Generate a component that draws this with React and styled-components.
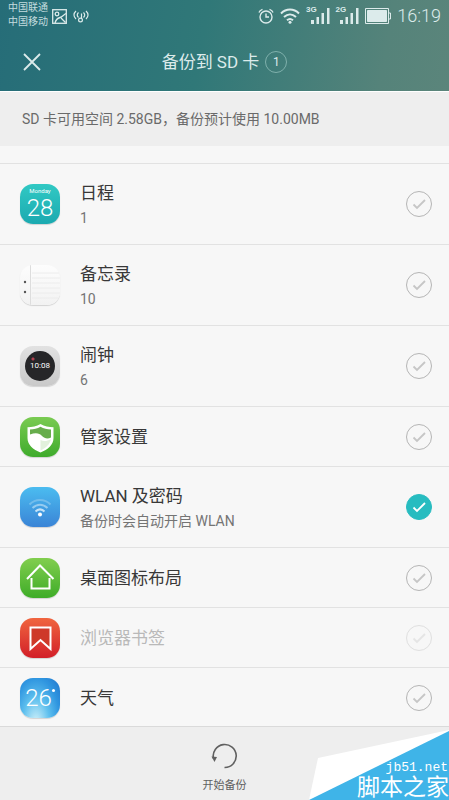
import React, { useState } from 'react';
import styled, { createGlobalStyle } from 'styled-components';

const GlobalStyle = createGlobalStyle`
  * {
    box-sizing: border-box;
  }

  body {
    margin: 0;
    background-color: #f7f7f7;
    font-family: Roboto, 'Noto Sans CJK SC', sans-serif;
    color: #3d3d3d;
  }
`;

const Screen = styled.div`
  position: relative;
  display: flex;
  flex-direction: column;
  height: 100vh;
  overflow: hidden;
`;

const Header = styled.header`
  flex: none;
  background: linear-gradient(100deg, #266d78 0%, #307878 45%, #55837a 85%, #5b857b 100%);
  border-bottom: 1px solid #ffffff;
  color: #dcebeb;
`;

const StatusBar = styled.div`
  display: flex;
  align-items: center;
  justify-content: space-between;
  height: 32px;
  padding: 0 8px;
`;

const StatusGroup = styled.div`
  display: flex;
  align-items: center;
  gap: ${(props) => props.$gap}px;
`;

const Carriers = styled.div`
  font-size: 10px;
  line-height: 14px;
  padding-bottom: 2px;
  color: #c3dcdf;
`;

const Time = styled.time`
  font-size: 18px;
  line-height: 32px;
  font-weight: 300;
`;

const NetworkType = styled.span`
  align-self: flex-start;
  font-family: 'Liberation Sans', sans-serif;
  font-size: 8px;
  font-weight: 700;
  line-height: 8px;
  margin-right: -6px;
`;

const Signal = styled.div`
  display: flex;
  height: 20px;
  padding-bottom: 2px;
  align-items: flex-end;
`;

const Toolbar = styled.div`
  display: grid;
  grid-template-columns: 1fr auto 1fr;
  align-items: center;
  height: 59px;
  padding: 0 22px;
`;

const IconButton = styled.button`
  display: flex;
  justify-self: start;
  padding: 0;
  border: 0;
  background: none;
  color: inherit;
  cursor: pointer;
`;

const Title = styled.h1`
  display: flex;
  align-items: center;
  gap: 6px;
  margin: 0;
  font-size: 17px;
  line-height: 24px;
  font-weight: 400;
`;

const Count = styled.span`
  width: 22px;
  height: 22px;
  border: 1px solid #7fb0ac;
  border-radius: 50%;
  font-size: 12px;
  line-height: 20px;
  text-align: center;
`;

const StorageInfo = styled.p`
  flex: none;
  margin: 0;
  padding: 0 22px;
  background-color: #eeeeee;
  color: #6a6a6a;
  font-size: 14px;
  line-height: 54px;
`;

const List = styled.ul`
  flex: 1;
  min-height: 0;
  overflow: hidden;
  margin: 0;
  padding: 17px 0 0;
  list-style: none;
`;

const Row = styled.label`
  display: flex;
  align-items: center;
  gap: 20px;
  min-height: ${(props) => (props.$tall ? 81 : 60)}px;
  padding: 0 17px 0 20px;
  border-top: 1px solid #e2e2e2;
  cursor: pointer;
`;

const RowText = styled.span`
  flex: 1;
  display: flex;
  flex-direction: column;
`;

const RowTitle = styled.span`
  font-size: 17px;
  line-height: 28px;
  color: ${(props) => (props.$disabled ? '#b9b9b9' : '#383838')};
`;

const RowDetail = styled.span`
  font-size: 14px;
  line-height: 22px;
  color: #747474;
`;

const CheckWrap = styled.span`
  display: grid;
  color: ${(props) => (props.$checked ? '#ffffff' : '#c6c6c6')};
  opacity: ${(props) => (props.$disabled ? 0.35 : 1)};

  > * {
    grid-area: 1 / 1;
  }

  svg {
    pointer-events: none;
  }
`;

const Checkbox = styled.input`
  appearance: none;
  width: 26px;
  height: 26px;
  margin: 0;
  border: 1px solid #b5b5b5;
  border-radius: 50%;

  &:checked {
    border-color: #27bcc0;
    background-color: #27bcc0;
  }
`;

const AppIcon = styled.span`
  flex: none;
  display: flex;
  flex-direction: column;
  align-items: center;
  justify-content: center;
  width: 40px;
  height: 40px;
  border-radius: 13px;
  overflow: hidden;
  background: ${(props) => props.$bg};
  box-shadow: 0 1px 1px rgba(0, 0, 0, 0.15);
  color: #ffffff;
`;

const Weekday = styled.span`
  font-size: 6px;
  line-height: 8px;
`;

const IconNumber = styled.span`
  display: flex;
  font-size: 24px;
  line-height: 26px;
  font-weight: 300;
`;

const DegreeDot = styled.span`
  width: 3px;
  height: 3px;
  margin-top: 4px;
  border-radius: 50%;
  background-color: #ffffff;
`;

const ClockFace = styled.span`
  width: 30px;
  height: 30px;
  border-radius: 50%;
  background: radial-gradient(circle at 8px 8px, #b0404f 1px, #262628 2px);
  font-size: 8px;
  line-height: 30px;
  text-align: center;
`;

const Footer = styled.footer`
  flex: none;
  display: flex;
  justify-content: center;
  height: 74px;
  border-top: 1px solid #dadada;
  background-color: #eeeeee;
`;

const StartButton = styled.button`
  display: flex;
  flex-direction: column;
  align-items: center;
  gap: 8px;
  padding: 15px 12px 0;
  border: 0;
  background: none;
  font-family: inherit;
  font-size: 11px;
  line-height: 16px;
  color: #606060;
  cursor: pointer;
`;

const Watermark = styled.div`
  position: absolute;
  right: 0;
  bottom: 0;
  display: grid;
  width: 140px;
  height: 70px;
  color: #ffffff;

  > * {
    grid-area: 1 / 1;
  }
`;

const WatermarkText = styled.div`
  display: flex;
  flex-direction: column;
  align-items: flex-end;
  justify-content: flex-end;
  z-index: 1;
`;

const SiteUrl = styled.span`
  padding-right: 1px;
  font-family: 'Liberation Mono', monospace;
  font-size: 13px;
  line-height: 16px;
`;

const SiteName = styled.span`
  font-size: 23px;
  line-height: 24px;
  white-space: nowrap;
`;

const SignalBars = () => (
  <svg width="19" height="16" viewBox="0 0 19 16" fill="currentColor">
    <path d="M0 12h3v4H0zM5.500 9H8v7H5.500zM10.500 5H13v11h-2.500zM16 0h2.500v16H16z" />
  </svg>
);

const CalendarIcon = () => (
  <AppIcon $bg="linear-gradient(#31c9c4, #1ba9b0)">
    <Weekday>Monday</Weekday>
    <IconNumber>28</IconNumber>
  </AppIcon>
);

const MemoIcon = () => (
  <AppIcon $bg="linear-gradient(#fdfdfd, #f2f2f2)">
    <svg width="40" height="40" viewBox="0 0 40 40">
      <path d="M12 8h28M12 13h28M12 18h28M12 23h28M12 28h28M12 33h28" stroke="#ececec" />
      <path d="M10.500 0v40" stroke="#dddddd" />
      <circle cx="5" cy="17" r="1.200" fill="#555555" />
      <circle cx="5" cy="27" r="1.200" fill="#555555" />
    </svg>
  </AppIcon>
);

const ClockIcon = () => (
  <AppIcon $bg="linear-gradient(#e2e2e2, #c9c9c9)">
    <ClockFace>10:08</ClockFace>
  </AppIcon>
);

const ShieldIcon = () => (
  <AppIcon $bg="linear-gradient(#7acb52, #3fab2c)">
    <svg width="40" height="40" viewBox="0 0 40 40">
      <path d="M20.500 7c4 2.500 8.500 3.200 13 3.200V21c0 7-5.500 11.500-13 14.500C13 32.500 7.500 28 7.500 21V10.200c4.500 0 9-.7 13-3.200z" fill="#ffffff" />
      <path d="M20.500 9.800c3.200 1.800 6.600 2.500 10.500 2.700v8c-3 1.500-6.500 1.200-9-1.500-2.500-3-6.500-3.500-12-1.500v-5c3.900-.2 7.300-.9 10.500-2.700z" fill="#67ad4c" />
      <path d="M20.500 23c3 1.500 6.500 1.200 10.300-.8-.5 4.800-4.500 8.300-10.300 11.300z" fill="#e2f1dc" />
    </svg>
  </AppIcon>
);

const WlanIcon = () => (
  <AppIcon $bg="linear-gradient(#4bbcf0, #3a84d6)">
    <svg width="40" height="40" viewBox="0 0 40 40" fill="none" strokeWidth="2">
      <path d="M9.500 17.500c6-6 15-6 21 0" stroke="#72bdec" />
      <path d="M12.500 21c4.500-4.500 10.500-4.500 15 0" stroke="#94cbf0" />
      <path d="M15.500 24.500c3-2.800 6-2.800 9 0" stroke="#c2e1f7" />
      <circle cx="20" cy="27.500" r="2" fill="#ffffff" />
    </svg>
  </AppIcon>
);

const HomeIcon = () => (
  <AppIcon $bg="linear-gradient(#82ce4e, #3eac28)">
    <svg width="40" height="40" viewBox="0 0 40 40" fill="none" stroke="#ffffff" strokeWidth="2">
      <path d="M7 21L20 7.500 33.500 21" />
      <path d="M11.500 20v10.500h18V20" />
    </svg>
  </AppIcon>
);

const BookmarkIcon = () => (
  <AppIcon $bg="linear-gradient(#f0653f, #d21f28)">
    <svg width="40" height="40" viewBox="0 0 40 40">
      <path d="M10.500 9.500h20V31l-10-9-10 9z" fill="#ce3929" stroke="#ffffff" strokeWidth="2" />
    </svg>
  </AppIcon>
);

const WeatherIcon = () => (
  <AppIcon $bg="radial-gradient(ellipse at 40% 115%, #d8f4fa 0%, #5fc0ee 40%, #3096e0 70%, #1f74cc 100%)">
    <IconNumber>
      26
      <DegreeDot />
    </IconNumber>
  </AppIcon>
);

const ITEMS = [
  { id: 'calendar', title: '日程', detail: '1', icon: <CalendarIcon /> },
  { id: 'memo', title: '备忘录', detail: '10', icon: <MemoIcon /> },
  { id: 'clock', title: '闹钟', detail: '6', icon: <ClockIcon /> },
  { id: 'manager', title: '管家设置', icon: <ShieldIcon /> },
  { id: 'wlan', title: 'WLAN 及密码', detail: '备份时会自动开启 WLAN', icon: <WlanIcon /> },
  { id: 'layout', title: '桌面图标布局', icon: <HomeIcon /> },
  { id: 'bookmark', title: '浏览器书签', icon: <BookmarkIcon />, disabled: true },
  { id: 'weather', title: '天气', icon: <WeatherIcon /> },
];

const App = () => {
  const [selected, setSelected] = useState(['wlan']);

  const toggle = (id) => {
    setSelected((prev) => (prev.includes(id) ? prev.filter((x) => x !== id) : [...prev, id]));
  };

  return (
    <Screen>
      <GlobalStyle />
      <Header>
        <StatusBar>
          <StatusGroup $gap={4}>
            <Carriers>
              <div>中国联通</div>
              <div>中国移动</div>
            </Carriers>
            <svg width="15" height="15" viewBox="0 0 15 15" fill="none" stroke="currentColor" strokeWidth="1.300">
              <rect x="0.700" y="0.700" width="13.600" height="13.600" />
              <circle cx="5" cy="5" r="1.800" />
              <path d="M3 14c1-4 3-5 5-5.500S11.500 6 14 4.500M9 9l4.500 4.500" />
            </svg>
            <svg width="20" height="15" viewBox="0 0 20 15" fill="none" stroke="currentColor" strokeWidth="1.200">
              <path d="M5 2C2.300 4.500 2.300 7.500 5 10M7.500 3.500c-1.600 1.600-1.600 3.400 0 5M15 2c2.700 2.500 2.700 5.500 0 8M12.500 3.500c1.600 1.600 1.600 3.400 0 5M10.500 4.500V10" />
              <circle cx="9.500" cy="11" r="1.900" />
            </svg>
          </StatusGroup>
          <StatusGroup $gap={6}>
            <svg width="16" height="16" viewBox="0 0 16 16" fill="none" stroke="currentColor" strokeWidth="1.400">
              <circle cx="8" cy="9" r="6" />
              <path d="M8 5.500V9h3M1 4.500C1.500 3 2.500 2 4.500 1.300M15 4.500C14.500 3 13.500 2 11.500 1.300" />
            </svg>
            <svg width="20" height="16" viewBox="0 0 20 16" fill="none" stroke="currentColor" strokeWidth="2">
              <path d="M1 5.500c5.300-5.200 12.700-5.200 18 0M4 9c3.700-3.500 8.300-3.500 12 0M7 12.200c2-1.700 4-1.700 6 0" />
              <circle cx="10" cy="14.200" r="1.500" fill="currentColor" stroke="none" />
            </svg>
            <Signal>
              <NetworkType>3G</NetworkType>
              <SignalBars />
            </Signal>
            <Signal>
              <NetworkType>2G</NetworkType>
              <SignalBars />
            </Signal>
            <svg width="26" height="16" viewBox="0 0 26 16" fill="none" stroke="currentColor">
              <path d="M.5.5h23v15H.5zM24 5h1.500v6H24" />
              <path d="M2.500 2.500h19v11h-19z" fill="currentColor" />
            </svg>
            <Time>16:19</Time>
          </StatusGroup>
        </StatusBar>
        <Toolbar>
          <IconButton type="button" aria-label="关闭">
            <svg width="20" height="20" viewBox="0 0 20 20" stroke="currentColor" strokeWidth="1.800">
              <path d="M2 2l16 16M18 2L2 18" />
            </svg>
          </IconButton>
          <Title>
            备份到 SD 卡
            <Count>{selected.length}</Count>
          </Title>
        </Toolbar>
      </Header>

      <StorageInfo>SD 卡可用空间 2.58GB，备份预计使用 10.00MB</StorageInfo>

      <List>
        {ITEMS.map((item) => {
          const checked = selected.includes(item.id);
          return (
            <li key={item.id}>
              <Row htmlFor={item.id} $tall={Boolean(item.detail)}>
                {item.icon}
                <RowText>
                  <RowTitle $disabled={item.disabled}>{item.title}</RowTitle>
                  {item.detail && <RowDetail>{item.detail}</RowDetail>}
                </RowText>
                <CheckWrap $checked={checked} $disabled={item.disabled}>
                  <Checkbox
                    type="checkbox"
                    id={item.id}
                    checked={checked}
                    disabled={item.disabled}
                    onChange={() => toggle(item.id)}
                  />
                  <svg width="26" height="26" viewBox="0 0 26 26" fill="none" stroke="currentColor" strokeWidth="1.800">
                    <path d="M7.500 13.500l3.500 3.500 8-8" />
                  </svg>
                </CheckWrap>
              </Row>
            </li>
          );
        })}
      </List>

      <Footer>
        <StartButton type="button">
          <svg width="28" height="28" viewBox="0 0 28 28" fill="none" stroke="currentColor" strokeWidth="1.600">
            <path d="M13.500 25.500a11.500 11.500 0 1 0-11-9" />
            <path d="M.5 14.500l5.500.5-2.500 5z" fill="currentColor" stroke="none" />
          </svg>
          开始备份
        </StartButton>
      </Footer>

      <Watermark>
        <svg width="140" height="70" viewBox="0 0 140 70">
          <path d="M0 70L9 28 140 0V70z" fill="#ffffff" />
          <path d="M0 70L140 1v69z" fill="#3fb4e8" />
        </svg>
        <WatermarkText>
          <SiteUrl>jb51.net</SiteUrl>
          <SiteName>脚本之家</SiteName>
        </WatermarkText>
      </Watermark>
    </Screen>
  );
};

export default App;
